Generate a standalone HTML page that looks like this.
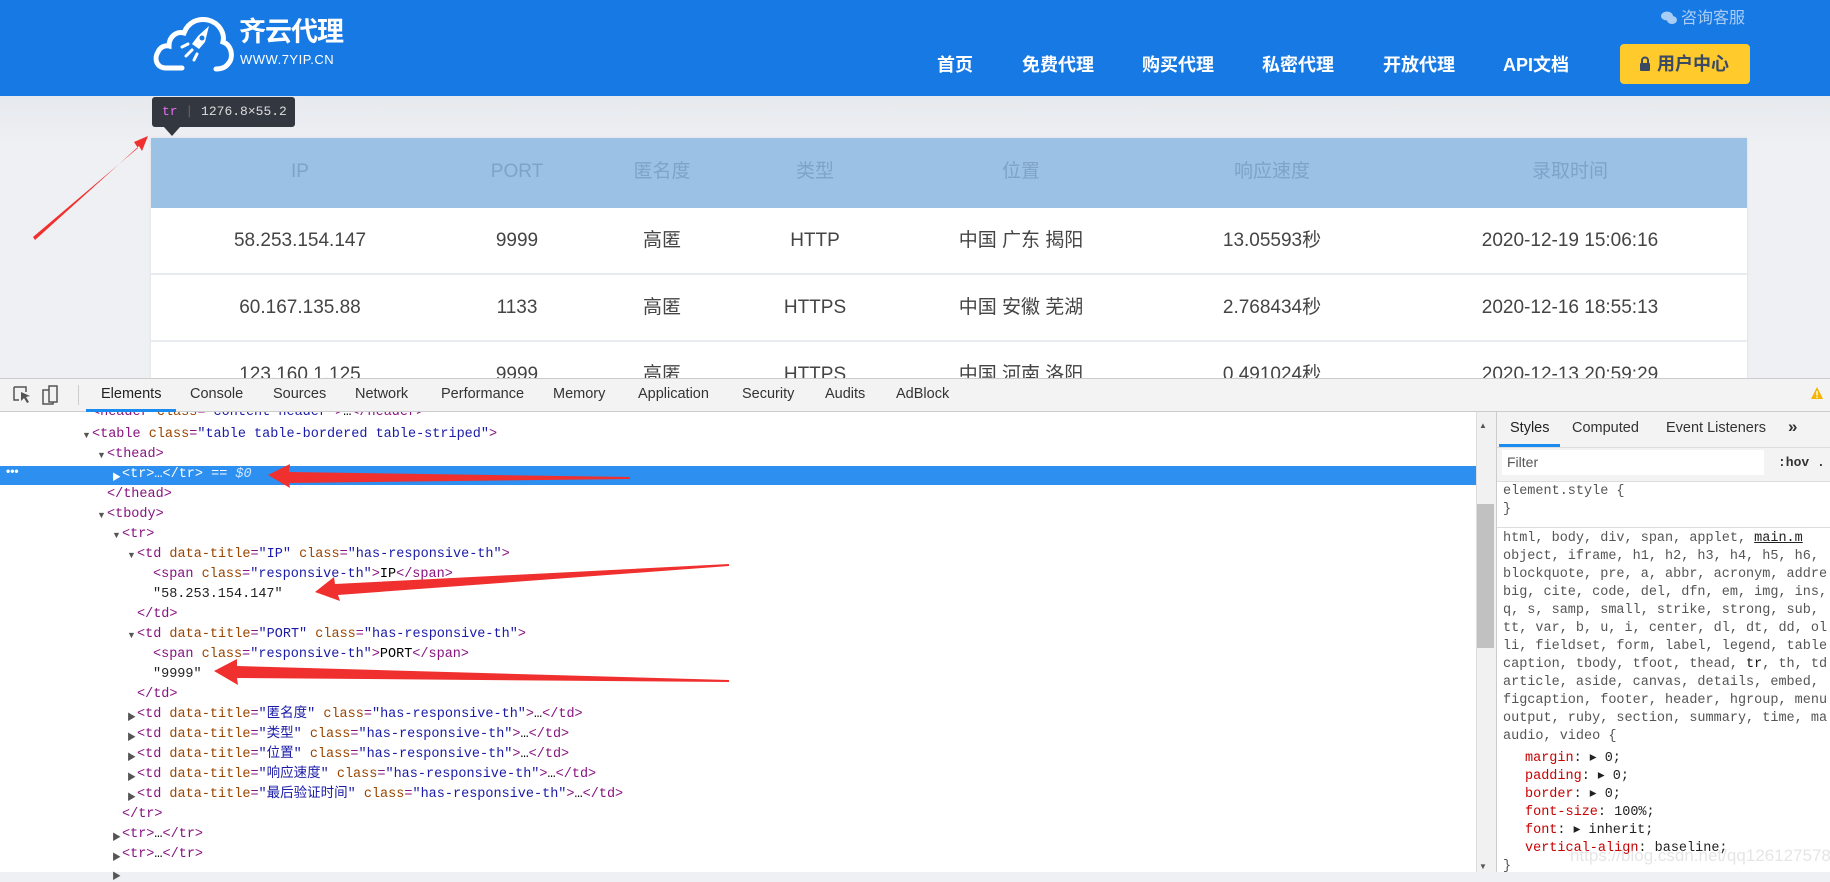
<!DOCTYPE html>
<html><head><meta charset="utf-8"><style>
*{margin:0;padding:0;box-sizing:border-box}
body{width:1830px;height:872px;overflow:hidden;position:relative;background:#eef0f4;font-family:"Liberation Sans","Noto Sans CJK SC",sans-serif}
.a{position:absolute;white-space:nowrap}
.hdr{left:0;top:0;width:1830px;height:96px;background:#1779e4}
.nav{color:#fff;font-weight:bold;font-size:18px;top:53px;line-height:24px}
.grad{left:0;top:96px;width:1830px;height:50px;background:linear-gradient(#e6e9ed,#eef0f4)}
.tbl{left:151px;top:138px;width:1596px;height:241px;background:#fff;box-shadow:0 0 3px rgba(0,0,0,.08)}
.th{left:151px;top:138px;width:1596px;height:70px;background:#9bc1e5}
.hc{color:#80a3c8;font-size:19px;top:160px;line-height:24px;height:24px;transform:translateX(-50%)}
.c{color:#444;font-size:19px;line-height:24px;height:24px;transform:translateX(-50%)}
.rl{left:151px;width:1596px;height:2px;background:#e8ebf0}
.dev{left:0;top:378px;width:1830px;height:494px;background:#fff}
.tabbar{left:0;top:378px;width:1830px;height:34px;background:#f3f3f3;border-top:1px solid #ccc;border-bottom:1px solid #ccc}
.tab{top:386px;font-size:14.5px;color:#333}
.m{font-family:"Liberation Mono","Noto Sans CJK SC",monospace;font-size:13.5px;line-height:20px;height:20px}
.t{color:#881280}.n{color:#994500}.v{color:#1a1aa6}.k{color:#222}
.tri{font-size:9px;color:#555;position:absolute}
.s{font-family:"Liberation Mono",monospace;font-size:13.5px;color:#555;line-height:18px;left:1503px}
.p{color:#c80000}
</style></head><body>
<div class="a hdr"></div>
<svg class="a" style="left:152px;top:14px" width="86" height="60" viewBox="0 0 86 60">
<path d="M30 54 H14 C4 54 2 44 6 38 C8 33 13 31 17 32 C17 22 25 17 32 19 C36 8 46 4 56 6 C68 9 73 20 71 28 C80 31 82 44 76 50 C73 54 68 55 64 55" fill="none" stroke="#fff" stroke-width="5" stroke-linecap="round"/>
<path d="M46 22 L57 12 L53 28 L47 35 L40 30 Z" fill="#fff"/>
<circle cx="50" cy="24" r="2.5" fill="#1779e4"/>
<path d="M40 36 L34 42 M45 40 L42 46 M36 30 L30 33" stroke="#fff" stroke-width="3" stroke-linecap="round"/>
</svg>
<div class="a" style="left:239px;top:16px;color:#fff;font-size:27px;line-height:32px;font-weight:bold;letter-spacing:-1px">齐云代理</div>
<div class="a" style="left:240px;top:52px;color:#fff;font-size:13px;line-height:16px;letter-spacing:0.5px">WWW.7YIP.CN</div>
<svg class="a" style="left:1660px;top:10px" width="18" height="16"><ellipse cx="7" cy="6" rx="6" ry="4.5" fill="#a9cdf5"/><ellipse cx="12" cy="10" rx="5" ry="4" fill="#a9cdf5"/></svg>
<div class="a" style="left:1681px;top:8px;color:#a9cdf5;font-size:16px;line-height:22px">咨询客服</div>
<div class="a nav" style="left:937px">首页</div>
<div class="a nav" style="left:1022px">免费代理</div>
<div class="a nav" style="left:1142px">购买代理</div>
<div class="a nav" style="left:1262px">私密代理</div>
<div class="a nav" style="left:1383px">开放代理</div>
<div class="a nav" style="left:1503px">API文档</div>
<div class="a" style="left:1620px;top:44px;width:130px;height:40px;background:#ffca2c;border-radius:4px"></div>
<svg class="a" style="left:1639px;top:56px" width="12" height="15"><path d="M3 7 V4.5 A3 3 0 0 1 9 4.5 V7" fill="none" stroke="#3b4a63" stroke-width="2"/><rect x="1" y="7" width="10" height="8" rx="1" fill="#3b4a63"/></svg>
<div class="a" style="left:1657px;top:52px;color:#3b4a63;font-weight:bold;font-size:18px;line-height:24px">用户中心</div>
<div class="a grad"></div>
<div class="a tbl"></div>
<div class="a th"></div>
<div class="a" style="left:152px;top:97px;width:143px;height:30px;background:#333740;border-radius:3px;font-family:'Liberation Mono',monospace;font-size:13px;line-height:30px;color:#ddd;padding-left:10px"><span style="color:#e36eec">tr</span> <span style="color:#666">|</span> 1276.8×55.2</div>
<div class="a" style="left:164px;top:127px;width:0;height:0;border-left:8px solid transparent;border-right:8px solid transparent;border-top:9px solid #333740"></div>
<div class="a hc" style="left:300px">IP</div>
<div class="a hc" style="left:517px">PORT</div>
<div class="a hc" style="left:662px">匿名度</div>
<div class="a hc" style="left:815px">类型</div>
<div class="a hc" style="left:1021px">位置</div>
<div class="a hc" style="left:1272px">响应速度</div>
<div class="a hc" style="left:1570px">录取时间</div>
<div class="a rl" style="top:273px"></div>
<div class="a rl" style="top:340px"></div>
<div class="a c" style="left:300px;top:229px">58.253.154.147</div>
<div class="a c" style="left:517px;top:229px">9999</div>
<div class="a c" style="left:662px;top:229px">高匿</div>
<div class="a c" style="left:815px;top:229px">HTTP</div>
<div class="a c" style="left:1021px;top:229px">中国 广东 揭阳</div>
<div class="a c" style="left:1272px;top:229px">13.05593秒</div>
<div class="a c" style="left:1570px;top:229px">2020-12-19 15:06:16</div>
<div class="a c" style="left:300px;top:296px">60.167.135.88</div>
<div class="a c" style="left:517px;top:296px">1133</div>
<div class="a c" style="left:662px;top:296px">高匿</div>
<div class="a c" style="left:815px;top:296px">HTTPS</div>
<div class="a c" style="left:1021px;top:296px">中国 安徽 芜湖</div>
<div class="a c" style="left:1272px;top:296px">2.768434秒</div>
<div class="a c" style="left:1570px;top:296px">2020-12-16 18:55:13</div>
<div class="a c" style="left:300px;top:363px">123.160.1.125</div>
<div class="a c" style="left:517px;top:363px">9999</div>
<div class="a c" style="left:662px;top:363px">高匿</div>
<div class="a c" style="left:815px;top:363px">HTTPS</div>
<div class="a c" style="left:1021px;top:363px">中国 河南 洛阳</div>
<div class="a c" style="left:1272px;top:363px">0.491024秒</div>
<div class="a c" style="left:1570px;top:363px">2020-12-13 20:59:29</div>
<svg class="a" style="left:0;top:0" width="200" height="260"><path d="M33 237 L138 148 L134 142 L148 136 L142 151 L139 146 L35 240 Z" fill="#f0302e"/></svg>

<div class="a dev"></div>
<div class="a" style="left:0;top:412px;width:1830px;height:460px;overflow:hidden">
<div style="position:absolute;left:0;top:54px;width:1476px;height:19px;background:#2d8ff0"></div>
<div class="a" style="left:6px;top:52px;color:#fff;font-size:12px;font-weight:bold">•••</div>
</div>
<div class="a m" style="left:92px;top:403px"><span class="t">&lt;header</span> <span class="n">class</span><span class="t">=</span><span class="v">"content-header"</span><span class="t">&gt;</span>…<span class="t">&lt;/header&gt;</span></div>
<div class="tri" style="left:82px;top:430px">▼</div><div class="a m" style="left:92px;top:425px"><span class="t">&lt;table</span> <span class="n">class</span><span class="t">=</span><span class="v">"table table-bordered table-striped"</span><span class="t">&gt;</span></div>
<div class="tri" style="left:97px;top:450px">▼</div><div class="a m" style="left:107px;top:445px"><span class="t">&lt;thead&gt;</span></div>
<div class="tri" style="left:112px;top:470px;color:#fff">▶</div><div class="a m" style="left:122px;top:465px;color:#fff">&lt;tr&gt;…&lt;/tr&gt; == <i style="color:#cfe6ff">$0</i></div>
<div class="a m" style="left:107px;top:485px"><span class="t">&lt;/thead&gt;</span></div>
<div class="tri" style="left:97px;top:510px">▼</div><div class="a m" style="left:107px;top:505px"><span class="t">&lt;tbody&gt;</span></div>
<div class="tri" style="left:112px;top:530px">▼</div><div class="a m" style="left:122px;top:525px"><span class="t">&lt;tr&gt;</span></div>
<div class="tri" style="left:127px;top:550px">▼</div><div class="a m" style="left:137px;top:545px"><span class="t">&lt;td</span> <span class="n">data-title</span><span class="t">=</span><span class="v">"IP"</span> <span class="n">class</span><span class="t">=</span><span class="v">"has-responsive-th"</span><span class="t">&gt;</span></div>
<div class="a m" style="left:153px;top:565px"><span class="t">&lt;span</span> <span class="n">class</span><span class="t">=</span><span class="v">"responsive-th"</span><span class="t">&gt;</span>IP<span class="t">&lt;/span&gt;</span></div>
<div class="a m k" style="left:153px;top:585px">"58.253.154.147"</div>
<div class="a m" style="left:137px;top:605px"><span class="t">&lt;/td&gt;</span></div>
<div class="tri" style="left:127px;top:630px">▼</div><div class="a m" style="left:137px;top:625px"><span class="t">&lt;td</span> <span class="n">data-title</span><span class="t">=</span><span class="v">"PORT"</span> <span class="n">class</span><span class="t">=</span><span class="v">"has-responsive-th"</span><span class="t">&gt;</span></div>
<div class="a m" style="left:153px;top:645px"><span class="t">&lt;span</span> <span class="n">class</span><span class="t">=</span><span class="v">"responsive-th"</span><span class="t">&gt;</span>PORT<span class="t">&lt;/span&gt;</span></div>
<div class="a m k" style="left:153px;top:665px">"9999"</div>
<div class="a m" style="left:137px;top:685px"><span class="t">&lt;/td&gt;</span></div>
<div class="tri" style="left:127px;top:710px">▶</div><div class="a m" style="left:137px;top:705px"><span class="t">&lt;td</span> <span class="n">data-title</span><span class="t">=</span><span class="v">"匿名度"</span> <span class="n">class</span><span class="t">=</span><span class="v">"has-responsive-th"</span><span class="t">&gt;</span>…<span class="t">&lt;/td&gt;</span></div>
<div class="tri" style="left:127px;top:730px">▶</div><div class="a m" style="left:137px;top:725px"><span class="t">&lt;td</span> <span class="n">data-title</span><span class="t">=</span><span class="v">"类型"</span> <span class="n">class</span><span class="t">=</span><span class="v">"has-responsive-th"</span><span class="t">&gt;</span>…<span class="t">&lt;/td&gt;</span></div>
<div class="tri" style="left:127px;top:750px">▶</div><div class="a m" style="left:137px;top:745px"><span class="t">&lt;td</span> <span class="n">data-title</span><span class="t">=</span><span class="v">"位置"</span> <span class="n">class</span><span class="t">=</span><span class="v">"has-responsive-th"</span><span class="t">&gt;</span>…<span class="t">&lt;/td&gt;</span></div>
<div class="tri" style="left:127px;top:770px">▶</div><div class="a m" style="left:137px;top:765px"><span class="t">&lt;td</span> <span class="n">data-title</span><span class="t">=</span><span class="v">"响应速度"</span> <span class="n">class</span><span class="t">=</span><span class="v">"has-responsive-th"</span><span class="t">&gt;</span>…<span class="t">&lt;/td&gt;</span></div>
<div class="tri" style="left:127px;top:790px">▶</div><div class="a m" style="left:137px;top:785px"><span class="t">&lt;td</span> <span class="n">data-title</span><span class="t">=</span><span class="v">"最后验证时间"</span> <span class="n">class</span><span class="t">=</span><span class="v">"has-responsive-th"</span><span class="t">&gt;</span>…<span class="t">&lt;/td&gt;</span></div>
<div class="a m" style="left:122px;top:805px"><span class="t">&lt;/tr&gt;</span></div>
<div class="tri" style="left:112px;top:830px">▶</div><div class="a m" style="left:122px;top:825px"><span class="t">&lt;tr&gt;</span>…<span class="t">&lt;/tr&gt;</span></div>
<div class="tri" style="left:112px;top:850px">▶</div><div class="a m" style="left:122px;top:845px"><span class="t">&lt;tr&gt;</span>…<span class="t">&lt;/tr&gt;</span></div>
<div class="tri" style="left:112px;top:869px">▶</div>
<svg class="a" style="left:0;top:400px" width="800" height="300">
<path d="M268 75 L290 64 L289 72 L630 77 L630 79 L289 83 L290 88 Z" fill="#f0302e"/>
<path d="M315 192 L334 177 L335 184 L729 164 L729 166 L338 195 L340 201 Z" fill="#f0302e"/>
<path d="M214 271 L237 259 L237 266 L729 280 L729 282 L237 278 L238 285 Z" fill="#f0302e"/>
</svg>

<div class="a tabbar"></div>
<svg class="a" style="left:12px;top:384px" width="50" height="22"><path d="M2 3 H14 V8 M2 3 V16 H7" fill="none" stroke="#555" stroke-width="1.5"/><path d="M9 8 L18 12 L14 13 L17 18 L15 19 L12 14 L9 17 Z" fill="#555"/><rect x="31" y="6" width="10" height="14" fill="none" stroke="#555" stroke-width="1.5"/><rect x="37" y="2" width="8" height="16" fill="#f3f3f3" stroke="#555" stroke-width="1.5"/></svg>
<div class="a" style="left:78px;top:385px;width:1px;height:20px;background:#ccc"></div>
<div class="a tab" style="left:101px;color:#222">Elements</div>
<div class="a" style="left:86px;top:409px;width:90px;height:3px;background:#1a8cf0"></div>
<div class="a tab" style="left:190px">Console</div>
<div class="a tab" style="left:273px">Sources</div>
<div class="a tab" style="left:355px">Network</div>
<div class="a tab" style="left:441px">Performance</div>
<div class="a tab" style="left:553px">Memory</div>
<div class="a tab" style="left:638px">Application</div>
<div class="a tab" style="left:742px">Security</div>
<div class="a tab" style="left:825px">Audits</div>
<div class="a tab" style="left:896px">AdBlock</div>
<svg class="a" style="left:1810px;top:386px" width="14" height="14"><path d="M7 1 L13 13 H1 Z" fill="#f4b400"/><rect x="6.3" y="5" width="1.4" height="4.5" fill="#fff"/><rect x="6.3" y="10.5" width="1.4" height="1.4" fill="#fff"/></svg>

<div class="a" style="left:1476px;top:412px;width:20px;height:460px;background:#f1f1f1;border-left:1px solid #ddd"></div>
<div class="a" style="left:1479px;top:421px;font-size:8px;color:#555">▲</div>
<div class="a" style="left:1479px;top:862px;font-size:8px;color:#555">▼</div>
<div class="a" style="left:1477px;top:504px;width:17px;height:144px;background:#c1c1c1"></div>
<div class="a" style="left:1496px;top:412px;width:1px;height:460px;background:#ccc"></div>
<div class="a" style="left:1497px;top:412px;width:333px;height:70px;background:#f3f3f3;border-bottom:1px solid #ddd"></div>
<div class="a" style="left:1497px;top:447px;width:333px;height:1px;background:#ddd"></div>
<div class="a tab" style="left:1510px;top:420px;color:#222">Styles</div>
<div class="a" style="left:1499px;top:444px;width:61px;height:3px;background:#1a8cf0"></div>
<div class="a tab" style="left:1572px;top:420px">Computed</div>
<div class="a tab" style="left:1666px;top:420px">Event Listeners</div>
<div class="a tab" style="left:1788px;top:417px;font-size:17px;font-weight:bold">»</div>
<div class="a" style="left:1502px;top:450px;width:262px;height:25px;background:#fff;font-size:14px;color:#555;padding:4px 5px">Filter</div>
<div class="a" style="left:1778px;top:455px;font-family:'Liberation Mono',monospace;font-size:13px;font-weight:bold;color:#333">:hov  .</div>
<div class="a s" style="top:483px">element.style {<br>}</div>
<div class="a" style="left:1497px;top:527px;width:333px;height:1px;background:#ddd"></div>
<div class="a s" style="top:530px">html, body, div, span, applet,    <u style="color:#222">main.m</u><br>object, iframe, h1, h2, h3, h4, h5, h6,<br>blockquote, pre, a, abbr, acronym, addre<br>big, cite, code, del, dfn, em, img, ins,<br>q, s, samp, small, strike, strong, sub,<br>tt, var, b, u, i, center, dl, dt, dd, ol<br>li, fieldset, form, label, legend, table<br>caption, tbody, tfoot, thead, <span style="color:#111">tr</span>, th, td<br>article, aside, canvas, details, embed,<br>figcaption, footer, header, hgroup, menu<br>output, ruby, section, summary, time, ma<br>audio, video {</div>
<div class="a s" style="left:1525px;top:750px;color:#222"><span class="p">margin</span>: ▸ 0;<br><span class="p">padding</span>: ▸ 0;<br><span class="p">border</span>: ▸ 0;<br><span class="p">font-size</span>: 100%;<br><span class="p">font</span>: ▸ inherit;<br><span class="p">vertical-align</span>: baseline;</div>
<div class="a s" style="top:858px">}</div>
<div class="a" style="left:1570px;top:846px;color:rgba(180,180,180,.35);font-size:17px">https://blog.csdn.net/qq1261275789</div>
</body></html>
